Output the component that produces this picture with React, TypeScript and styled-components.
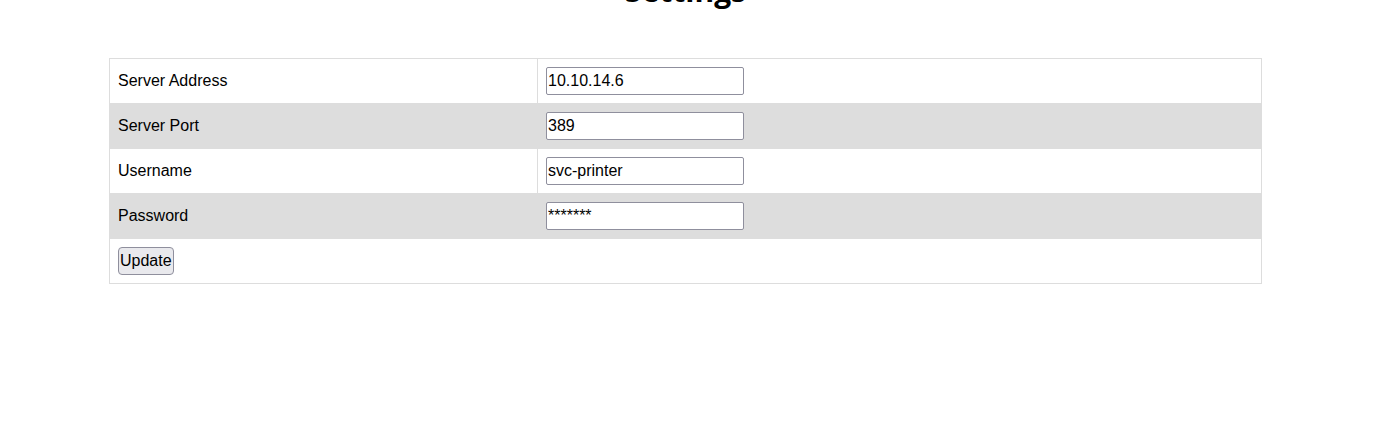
import React from "react";
import styled, { createGlobalStyle } from "styled-components";

const Global = createGlobalStyle`
  html, body { margin: 0; padding: 0; background: #ffffff; }
  body { font-family: "Liberation Sans", Arial, sans-serif; color: #000; overflow: hidden; }
`;

const Page = styled.div`
  padding-left: 109px;
  width: 1153px;
`;

const Title = styled.h1`
  margin: -24px 0 0;
  height: 30px;
  font-family: "Open Sans", sans-serif;
  font-weight: 700;
  font-size: 30px;
  line-height: 30px;
  text-align: center;
  color: #000;
`;

const Table = styled.table`
  margin-top: 52px;
  width: 1153px;
  border-collapse: collapse;
  table-layout: fixed;
  border: 1px solid #dddddd;
  font-size: 16px;
`;

const Row = styled.tr<{ $shaded?: boolean }>`
  background: ${(p) => (p.$shaded ? "#dddddd" : "#ffffff")};
`;

const Cell = styled.td`
  padding: 8px;
  border: 1px solid #dddddd;
  height: 28px;
  vertical-align: middle;
  line-height: 18px;
`;

const Field = styled.input`
  box-sizing: border-box;
  width: 198px;
  height: 28px;
  padding: 1px 1px;
  border: 1px solid #8f8f9d;
  border-radius: 2px;
  background: #fff;
  font-family: "Liberation Sans", Arial, sans-serif;
  font-size: 16px;
  color: #000;
  display: block;
`;

const Button = styled.button`
  box-sizing: border-box;
  height: 28px;
  padding: 0 1px;
  border: 1px solid #8f8f9d;
  border-radius: 4px;
  background: #e9e9ed;
  font-family: "Liberation Sans", Arial, sans-serif;
  font-size: 16px;
  color: #000;
  display: block;
`;

const rows = [
  { label: "Server Address", value: "10.10.14.6", type: "text" },
  { label: "Server Port", value: "389", type: "text" },
  { label: "Username", value: "svc-printer", type: "text" },
  { label: "Password", value: "*******", type: "text" },
];

export default function App() {
  return (
    <Page>
      <Global />
      <Title>Settings</Title>
      <Table>
        <colgroup>
          <col style={{ width: 428 }} />
          <col />
        </colgroup>
        <tbody>
          {rows.map((r, i) => (
            <Row key={r.label} $shaded={i % 2 === 1}>
              <Cell>{r.label}</Cell>
              <Cell>
                <Field type={r.type} defaultValue={r.value} readOnly />
              </Cell>
            </Row>
          ))}
          <Row>
            <Cell colSpan={2}>
              <Button type="button">Update</Button>
            </Cell>
          </Row>
        </tbody>
      </Table>
    </Page>
  );
}
